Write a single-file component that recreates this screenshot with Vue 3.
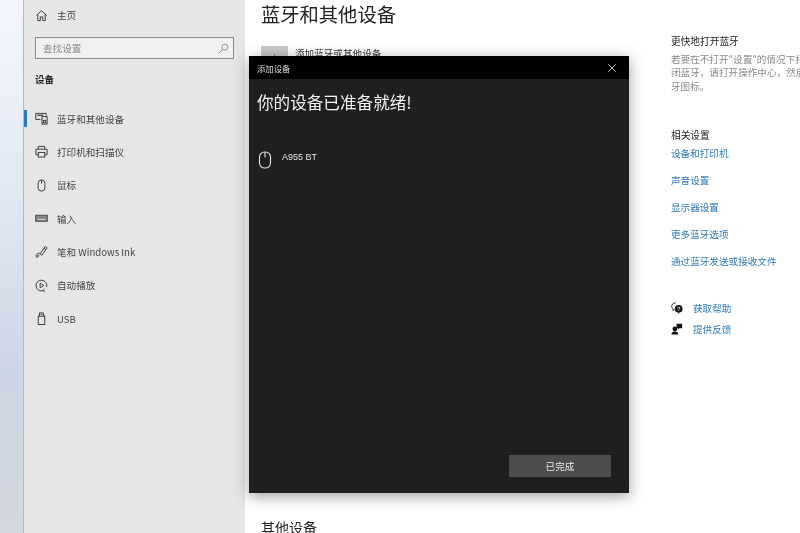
<script setup>
const navItems = [
  { id: 'bt', label: '蓝牙和其他设备', active: true },
  { id: 'printer', label: '打印机和扫描仪' },
  { id: 'mouse', label: '鼠标' },
  { id: 'input', label: '输入' },
  { id: 'pen', label: '笔和 Windows Ink' },
  { id: 'play', label: '自动播放' },
  { id: 'usb', label: 'USB' },
]
const links = ['设备和打印机', '声音设置', '显示器设置', '更多蓝牙选项', '通过蓝牙发送或接收文件']
</script>

<template>
  <div class="screen">
    <div class="wallpaper"></div>
    <aside class="sidebar">
      <div class="home">
        <svg class="icon" viewBox="0 0 14 14" fill="none" stroke="#333" stroke-width="1">
          <path d="M1.500 7 7 1.800 12.500 7M3 5.800V12.500H5.700V8.500H8.300V12.500H11V5.800" />
        </svg>
        <span>主页</span>
      </div>
      <div class="search">
        <span>查找设置</span>
        <svg viewBox="0 0 12 12" width="11" height="11" fill="none" stroke="#8a8a8a" stroke-width="1">
          <circle cx="7.500" cy="4.500" r="3.300" />
          <path d="M5 7 1 11" />
        </svg>
      </div>
      <div class="group">设备</div>
      <nav class="nav">
        <div v-for="item in navItems" :key="item.id" class="nav-row" :class="{ active: item.active }">
          <svg class="icon" viewBox="0 0 14 14" fill="none" stroke="#333" stroke-width="1">
            <template v-if="item.id === 'bt'">
              <path d="M6 8H.8V1.500H12V4" />
              <path d="M2.500 3.500H9" stroke-width="1.300" />
              <rect x="7.500" y="5" width="5.500" height="8" fill="#e6e6e6" />
              <rect x="9" y="9" width="2.500" height="2.500" />
            </template>
            <template v-else-if="item.id === 'printer'">
              <path d="M3.500 4.500V1.500H10.500V4.500M3.500 10.500H1V4.500H13V10.500H10.500" />
              <rect x="3.500" y="8" width="7" height="5" />
            </template>
            <template v-else-if="item.id === 'mouse'">
              <rect x="3.300" y="1" width="7.400" height="12" rx="3.700" />
              <path d="M7 1.500V5" />
            </template>
            <template v-else-if="item.id === 'input'">
              <rect x=".8" y="3.500" width="12.400" height="6.500" fill="#888" stroke="#444" />
              <path d="M3 8h8" stroke="#ddd" />
            </template>
            <template v-else-if="item.id === 'pen'">
              <path d="M5.500 9.500 11 1.500 13 3 7.500 11Z" />
              <path d="M9.500 3.500 11.500 5" />
              <path d="M5.500 9.500C4 8 1 10 1 11.800S3.500 13.500 4 12 2.800 10.500 2 12" />
            </template>
            <template v-else-if="item.id === 'play'">
              <path d="M8.500 12.600A5.800 5.800 0 1 1 12.500 8.500" />
              <path d="M5.500 4.500 9.500 7 5.500 9.500Z" />
              <path d="M10 10.500 8.500 12.600 10.500 13.500" />
            </template>
            <template v-else>
              <rect x="3.500" y="4.500" width="7" height="9" />
              <path d="M4.800 4.500V1H9.200V4.500" />
              <path d="M6 2.500H8" />
            </template>
          </svg>
          <span>{{ item.label }}</span>
        </div>
      </nav>
    </aside>

    <main class="main">
      <section class="content">
        <h1>蓝牙和其他设备</h1>
        <div class="add">
          <div class="add-tile">+</div>
          <span>添加蓝牙或其他设备</span>
        </div>
        <h2>其他设备</h2>
      </section>
      <section class="side">
        <h3>更快地打开蓝牙</h3>
        <p>若要在不打开"设置"的情况下打开或关<br />闭蓝牙，请打开操作中心，然后选择蓝<br />牙图标。</p>
        <h3 class="related">相关设置</h3>
        <a v-for="link in links" :key="link" class="link">{{ link }}</a>
        <div class="help first">
          <svg viewBox="0 0 14 14" width="12" height="12" fill="#1a1a1a">
            <path d="M5.500 1C2.700 1 .8 2.800.8 5c0 1.200.6 2.200 1.400 2.900V10l2-1.200h1" fill="none" stroke="#1a1a1a" />
            <circle cx="9" cy="8" r="4.500" />
            <path d="M9.500 12v2l-2-2z" />
            <text x="9" y="10.300" font-size="6.500" text-anchor="middle" fill="#fff" font-family="Liberation Sans">?</text>
          </svg>
          <a>获取帮助</a>
        </div>
        <div class="help">
          <svg viewBox="0 0 14 14" width="12" height="12" fill="#111">
            <circle cx="4.500" cy="7" r="2.800" />
            <path d="M.5 13.500c0-2.500 1.500-3.500 4-3.500s4 1 4 3.500z" />
            <path d="M6.500 1H13v5H9.500L8 7.500V6H6.500z" />
          </svg>
          <a>提供反馈</a>
        </div>
      </section>
    </main>

    <div class="dialog">
      <header class="titlebar">
        <span>添加设备</span>
        <svg viewBox="0 0 10 10" width="8" height="8" fill="none" stroke="#e8e8e8" stroke-width="1.100">
          <path d="M.5.500l9 9M9.500.500l-9 9" />
        </svg>
      </header>
      <div class="body">
        <div class="heading">你的设备已准备就绪!</div>
        <div class="device">
          <svg viewBox="0 0 14 18" width="14" height="18" fill="none" stroke="#e8e8e8" stroke-width="1.100">
            <rect x="1.500" y="1" width="11" height="16" rx="5" />
            <path d="M7 1V6.500" />
          </svg>
          <span>A955 BT</span>
        </div>
        <div class="footer">
          <button class="done" type="button">已完成</button>
        </div>
      </div>
    </div>
  </div>
</template>

<style>
html, body { margin: 0; background: #fff; }
</style>

<style scoped>
.screen {
  position: relative;
  display: flex;
  width: 800px;
  height: 533px;
  overflow: hidden;
  background: #fff;
  font-family: "Noto Sans CJK SC", "Liberation Sans", sans-serif;
  font-size: 9.600px;
  color: #333;
  filter: blur(0.3px);
}
.wallpaper {
  width: 23px;
  flex: none;
  background: linear-gradient(180deg, #f3f6fc 0%, #e2e9f5 35%, #ccd5e4 70%, #d3d7de 100%);
  border-right: 1px solid #b4b8bf;
}
.sidebar {
  width: 221px;
  flex: none;
  box-sizing: border-box;
  padding: 0 11px;
  background: #e6e6e6;
}
.icon { width: 13px; height: 13px; flex: none; }
.home {
  display: flex;
  align-items: center;
  gap: 9px;
  height: 30px;
  color: #444;
}
.search {
  display: flex;
  align-items: center;
  justify-content: space-between;
  box-sizing: border-box;
  height: 22px;
  margin-top: 7px;
  padding: 0 4px 0 7px;
  background: #f0f0f0;
  border: 1.500px solid #8c8c8c;
  color: #8a8a8a;
}
.group {
  margin-top: 13px;
  height: 14px;
  line-height: 14px;
  font-weight: 700;
  color: #222;
}
.nav { margin-top: 16px; }
.nav-row {
  position: relative;
  display: flex;
  align-items: center;
  gap: 9px;
  height: 33.330px;
  color: #444;
}
.nav-row.active::before {
  content: "";
  position: absolute;
  left: -11px;
  top: 8px;
  width: 3px;
  height: 17px;
  background: #2f78b7;
}
.main { flex: 1; display: flex; min-width: 0; }
.content {
  position: relative;
  width: 426px;
  flex: none;
  box-sizing: border-box;
  padding-left: 16px;
}
h1 {
  margin: 3px 0 0;
  height: 22px;
  line-height: 22px;
  font-size: 19.300px;
  font-weight: 400;
  color: #222;
}
.add { display: flex; gap: 7px; margin-top: 21px; }
.add-tile {
  width: 27px;
  height: 27px;
  flex: none;
  background: #c8c8c8;
  color: #555;
  text-align: center;
  line-height: 20px;
}
.add span { line-height: 14px; color: #333; }
h2 {
  position: absolute;
  left: 16px;
  top: 518px;
  margin: 0;
  font-size: 14px;
  line-height: 18px;
  font-weight: 400;
  color: #222;
}
.side { flex: 1; min-width: 0; padding-top: 34px; overflow: hidden; }
h3 {
  margin: 0;
  font-size: 9.700px;
  line-height: 14px;
  font-weight: 400;
  color: #222;
}
p {
  margin: 5px 0 0;
  width: 160px;
  line-height: 13.300px;
  font-size: 9.600px;
  color: #8a8a8a;
  white-space: nowrap;
}
.related { margin-top: 35px; }
.link {
  display: block;
  height: 27px;
  line-height: 14px;
  color: #2f78b7;
  white-space: nowrap;
}
.related + .link { margin-top: 4px; }
.help {
  display: flex;
  align-items: center;
  gap: 10px;
  height: 21px;
  color: #2f78b7;
}
.help.first { margin-top: 17px; }
.dialog {
  position: absolute;
  left: 249px;
  top: 56px;
  width: 380px;
  height: 437px;
  display: flex;
  flex-direction: column;
  background: #1f1f1f;
  box-shadow: 0 3px 14px rgba(0, 0, 0, 0.38);
  color: #eee;
}
.titlebar {
  display: flex;
  align-items: center;
  justify-content: space-between;
  flex: none;
  height: 23px;
  padding: 0 13px 0 8px;
  background: #000;
  font-size: 8.400px;
  color: #ddd;
}
.body {
  flex: 1;
  display: flex;
  flex-direction: column;
  padding: 0 18px 16px 8px;
}
.heading {
  margin-top: 11px;
  height: 24px;
  line-height: 24px;
  font-size: 16.600px;
  color: #f4f4f4;
}
.device {
  display: flex;
  gap: 10px;
  margin-top: 37px;
  padding-left: 1px;
  font-size: 9px;
  line-height: 12px;
  font-family: "Liberation Sans", sans-serif;
  color: #e4e4e4;
}
.footer { margin-top: auto; display: flex; justify-content: flex-end; }
.done {
  width: 102px;
  height: 22px;
  padding: 0;
  border: none;
  background: #4d4d4d;
  color: #e8e8e8;
  font: inherit;
  font-size: 9.600px;
}
</style>
